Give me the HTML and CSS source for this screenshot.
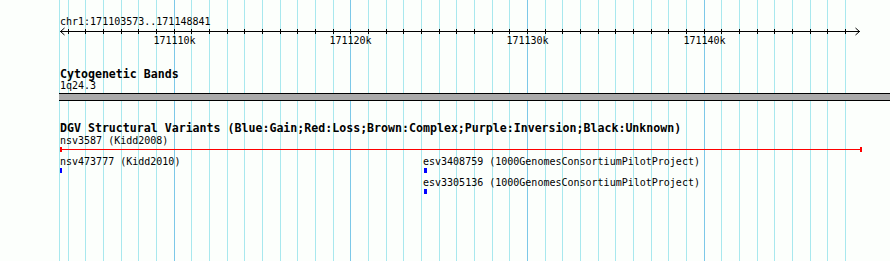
FILE: index.html
```html
<!DOCTYPE html>
<html lang="en">
<head>
    <meta charset="UTF-8">
    <title>chr1:171103573..171148841</title>
    <link rel="stylesheet" href="styles.css">
</head>
<body>
    <div class="panel">
        <svg class="grid" id="grid" width="890" height="261"></svg>
        <div class="content">
            <div class="ruler">
                <div class="seg-name">chr1:171103573..171148841</div>
                <svg class="scale" id="scale" width="830" height="20">
                    <line x1="0" y1="4.5" x2="800" y2="4.5"></line>
                    <path d="M4.5 1 L0.5 4.5 L4.5 8"></path>
                    <path d="M795.5 1 L799.5 4.5 L795.5 8"></path>
                </svg>
            </div>

            <div class="track cyto">
                <div class="track-title">Cytogenetic Bands</div>
                <div class="label">1q24.3</div>
                <div class="band"></div>
            </div>

            <div class="track dgv">
                <div class="track-title">DGV Structural Variants (Blue:Gain;Red:Loss;Brown:Complex;Purple:Inversion;Black:Unknown)</div>
                <div class="loss">
                    <div class="label">nsv3587 (Kidd2008)</div>
                    <div class="span-bar" style="width: 802px"></div>
                </div>
                <div class="lane first">
                    <div class="feature" style="left: 0px">
                        <div class="label">nsv473777 (Kidd2010)</div>
                        <div class="mark" style="width: 2px"></div>
                    </div>
                    <div class="feature" style="left: 363px">
                        <div class="label">esv3408759 (1000GenomesConsortiumPilotProject)</div>
                        <div class="mark" style="width: 3px; margin-left: 1px"></div>
                    </div>
                </div>
                <div class="lane">
                    <div class="feature" style="left: 363px">
                        <div class="label">esv3305136 (1000GenomesConsortiumPilotProject)</div>
                        <div class="mark" style="width: 3px; margin-left: 1px"></div>
                    </div>
                </div>
            </div>
        </div>
    </div>

    <script>
        const start = 171103573, end = 171148841;
        const left = 60, width = 800;
        const ns = 'http://www.w3.org/2000/svg';

        function px(pos) {
            return left + (pos - start) * width / (end - start);
        }

        function add(parent, name, attrs, text) {
            const node = document.createElementNS(ns, name);
            for (const key in attrs) node.setAttribute(key, attrs[key]);
            if (text) node.textContent = text;
            parent.appendChild(node);
        }

        const grid = document.getElementById('grid');
        const scale = document.getElementById('scale');

        add(grid, 'line', { x1: 59.5, y1: 0, x2: 59.5, y2: 261 });
        for (let k = Math.ceil(start / 1000); k * 1000 <= end; k++) {
            const x = Math.round(px(k * 1000)) + 0.5;
            const major = k % 10 === 0;
            add(grid, 'line', { x1: x, y1: 0, x2: x, y2: 261, class: major ? 'major' : '' });
            add(scale, 'line', { x1: x - left, y1: 2, x2: x - left, y2: 7 });
            if (major) {
                add(scale, 'text', { x: x - left, y: 17, 'text-anchor': 'middle' }, k + 'k');
            }
        }
    </script>
</body>
</html>
```

FILE: styles.css
```css
body {
    margin: 0;
    background-color: #fcfffc;
    font-family: 'DejaVu Sans Mono', monospace;
    font-size: 10px;
    color: #000;
}
.panel {
    position: relative;
    width: 890px;
    height: 261px;
    overflow: hidden;
}
.grid {
    position: absolute;
    top: 0;
    left: 0;
}
.grid line {
    stroke: #a8e8ee;
    stroke-width: 1;
}
.grid line.major {
    stroke: #7cc8e8;
}
.content {
    position: relative;
    padding-left: 60px;
}
.seg-name {
    padding-top: 16px;
    line-height: 11px;
}
.scale {
    display: block;
}
.scale line, .scale path {
    stroke: #000;
    stroke-width: 1;
    fill: none;
}
.scale text {
    font-family: 'DejaVu Sans Mono', monospace;
    font-size: 10px;
    fill: #000;
}
.track-title {
    font-weight: bold;
    font-size: 11.6px;
    line-height: 12px;
    white-space: nowrap;
}
.label {
    line-height: 11px;
    white-space: nowrap;
}
.cyto, .dgv {
    margin-top: 21px;
}
.band {
    margin: 2px 0 0 -1px;
    height: 8px;
    box-sizing: border-box;
    border-top: 1px solid #000;
    border-bottom: 1px solid #000;
    background-color: #aaaaaa;
}
.loss .label {
    margin-top: 1px;
}
.span-bar {
    margin-top: 1px;
    height: 5px;
    box-sizing: border-box;
    border-left: 2px solid #f00;
    border-right: 2px solid #f00;
    background: linear-gradient(#f00, #f00) 0 2px / 100% 1px no-repeat;
}
.lane {
    position: relative;
    height: 21px;
}
.lane.first {
    margin-top: 4px;
}
.feature {
    position: absolute;
    top: 0;
}
.mark {
    margin-top: 1px;
    height: 5px;
    background-color: #00f;
}
```
